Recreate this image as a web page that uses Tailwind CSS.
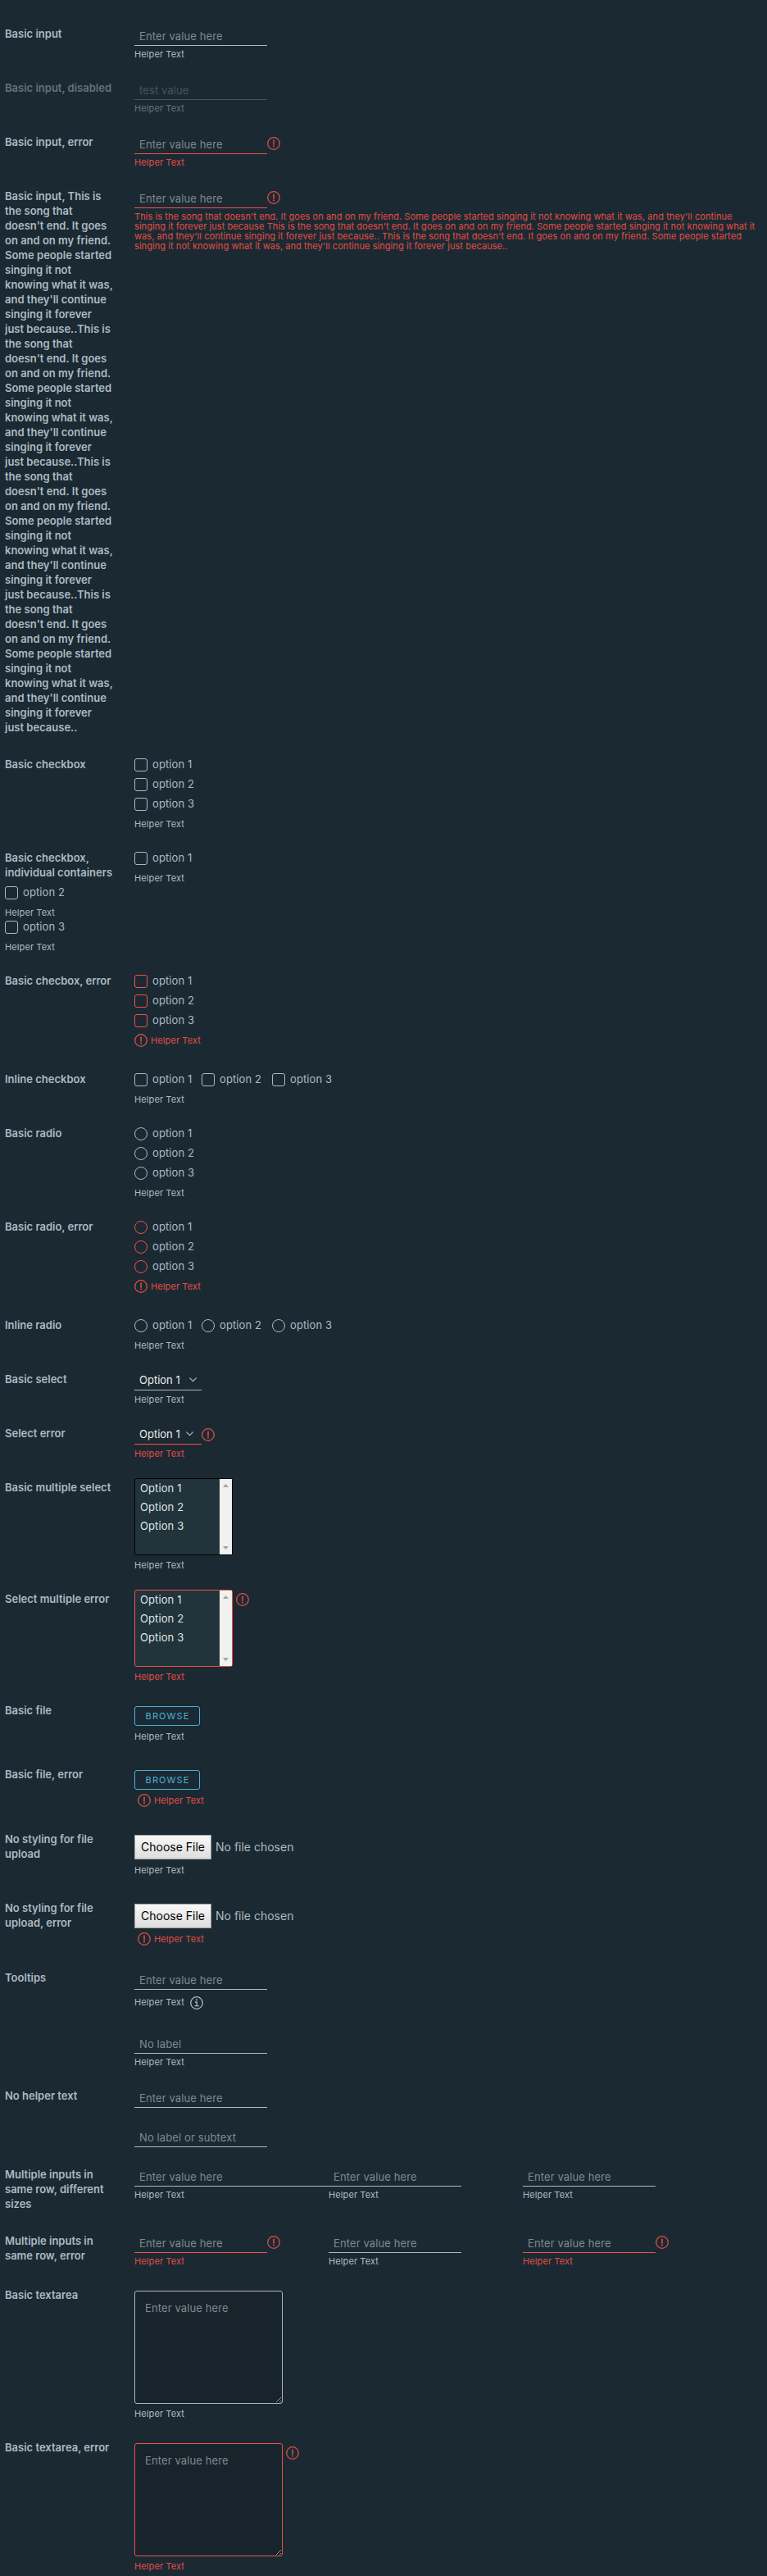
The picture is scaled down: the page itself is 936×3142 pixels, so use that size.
<!DOCTYPE html>
<html lang="en">
<head>
<meta charset="utf-8">
<title>Horizontal form</title>
<script src="https://cdn.jsdelivr.net/npm/@tailwindcss/browser@4"></script>
</head>
<body class="h-[3142px] overflow-hidden bg-[#1b2a32] pt-8 pl-1.5 font-[Inter,sans-serif] text-[13px] leading-[18px] text-[#acbac3]">
<svg class="hidden">
  <symbol id="alert" viewBox="0 0 16 16"><circle cx="8" cy="8" r="7.3" fill="none" stroke="currentColor" stroke-width="1.3"/><path d="M8 4.2v5" stroke="currentColor" stroke-width="1.5" stroke-linecap="round"/><circle cx="8" cy="11.5" r=".95" fill="currentColor"/></symbol>
  <symbol id="info" viewBox="0 0 16 16"><circle cx="8" cy="8" r="7.3" fill="none" stroke="currentColor" stroke-width="1.3"/><circle cx="7.9" cy="4.2" r="1.05" fill="currentColor"/><path d="M6.4 7h1.8v4.6M6 11.7h4.2" fill="none" stroke="currentColor" stroke-width="1.3" stroke-linecap="round"/></symbol>
  <symbol id="chevron" viewBox="0 0 9 6"><path d="M.7.8 4.5 4.6 8.3.8" fill="none" stroke="currentColor" stroke-width="1.2" stroke-linecap="round"/></symbol>
</svg>
<form class="flex flex-col">

<div class="flex h-[66px]">
  <label class="w-[158px] font-semibold">Basic input</label>
  <div><input class="block h-6 w-[162px] border-b border-[#acbac3] px-1.5 tracking-[0.11px] placeholder:text-[#7f898e]" placeholder="Enter value here"><p class="mt-1 text-[11px] leading-3 tracking-[0.1px]">Helper Text</p></div>
</div>

<div class="flex h-[66px]">
  <label class="w-[158px] font-semibold text-[#64727b]">Basic input, disabled</label>
  <div><input disabled class="block h-6 w-[162px] border-b border-[#495962] px-1.5 tracking-[0.11px] text-[#44535b]" value="test value"><p class="mt-1 text-[11px] leading-3 tracking-[0.1px] text-[#64727b]">Helper Text</p></div>
</div>

<div class="flex h-[66px]">
  <label class="w-[158px] font-semibold">Basic input, error</label>
  <div>
    <div class="flex"><input class="block h-6 w-[162px] border-b border-[#f54f47] px-1.5 tracking-[0.11px] placeholder:text-[#7f898e]" placeholder="Enter value here"><svg class="mt-[3px] size-4 text-[#e14c46]"><use href="#alert"/></svg></div>
    <p class="mt-1 text-[11px] leading-3 tracking-[0.1px] text-[#e14c46]">Helper Text</p>
  </div>
</div>

<div class="flex h-[693px]">
  <label class="w-[158px] font-semibold whitespace-nowrap">Basic input, This is<br>the song that<br>doesn't end. It goes<br>on and on my friend.<br>Some people started<br>singing it not<br>knowing what it was,<br>and they'll continue<br>singing it forever<br>just because..This is<br>the song that<br>doesn't end. It goes<br>on and on my friend.<br>Some people started<br>singing it not<br>knowing what it was,<br>and they'll continue<br>singing it forever<br>just because..This is<br>the song that<br>doesn't end. It goes<br>on and on my friend.<br>Some people started<br>singing it not<br>knowing what it was,<br>and they'll continue<br>singing it forever<br>just because..This is<br>the song that<br>doesn't end. It goes<br>on and on my friend.<br>Some people started<br>singing it not<br>knowing what it was,<br>and they'll continue<br>singing it forever<br>just because..</label>
  <div>
    <div class="flex"><input class="block h-6 w-[162px] border-b border-[#f54f47] px-1.5 tracking-[0.11px] placeholder:text-[#7f898e]" placeholder="Enter value here"><svg class="mt-[3px] size-4 text-[#e14c46]"><use href="#alert"/></svg></div>
    <p class="mt-1 text-[11px] leading-3 tracking-[0.07px] whitespace-nowrap text-[#e14c46]">This is the song that doesn't end. It goes on and on my friend. Some people started singing it not knowing what it was, and they'll continue<br>singing it forever just because This is the song that doesn't end. It goes on and on my friend. Some people started singing it not knowing what it<br>was, and they'll continue singing it forever just because.. This is the song that doesn't end. It goes on and on my friend. Some people started<br>singing it not knowing what it was, and they'll continue singing it forever just because..</p>
  </div>
</div>

<div class="flex h-[114px]">
  <label class="w-[158px] font-semibold">Basic checkbox</label>
  <div class="tracking-[0.1px]">
    <div class="flex h-6 gap-1.5"><i class="mt-0.5 size-4 rounded-[3px] border border-[#acbac3]"></i>option 1</div>
    <div class="flex h-6 gap-1.5"><i class="mt-0.5 size-4 rounded-[3px] border border-[#acbac3]"></i>option 2</div>
    <div class="flex h-6 gap-1.5"><i class="mt-0.5 size-4 rounded-[3px] border border-[#acbac3]"></i>option 3</div>
    <p class="mt-1 text-[11px] leading-3">Helper Text</p>
  </div>
</div>

<div class="h-[150px]">
  <div class="flex h-[42px]">
    <label class="w-[158px] font-semibold">Basic checkbox,<br>individual containers</label>
    <div class="tracking-[0.1px]"><div class="flex h-6 gap-1.5"><i class="mt-0.5 size-4 rounded-[3px] border border-[#acbac3]"></i>option 1</div><p class="mt-1 text-[11px] leading-3">Helper Text</p></div>
  </div>
  <div class="h-[42px] tracking-[0.1px]"><div class="flex h-6 gap-1.5"><i class="mt-0.5 size-4 rounded-[3px] border border-[#acbac3]"></i>option 2</div><p class="mt-1 text-[11px] leading-3">Helper Text</p></div>
  <div class="h-[42px] tracking-[0.1px]"><div class="flex h-6 gap-1.5"><i class="mt-0.5 size-4 rounded-[3px] border border-[#acbac3]"></i>option 3</div><p class="mt-1 text-[11px] leading-3">Helper Text</p></div>
</div>

<div class="flex h-[120px]">
  <label class="w-[158px] font-semibold">Basic checbox, error</label>
  <div class="tracking-[0.1px]">
    <div class="flex h-6 gap-1.5"><i class="mt-0.5 size-4 rounded-[3px] border border-[#f54f47]"></i>option 1</div>
    <div class="flex h-6 gap-1.5"><i class="mt-0.5 size-4 rounded-[3px] border border-[#f54f47]"></i>option 2</div>
    <div class="flex h-6 gap-1.5"><i class="mt-0.5 size-4 rounded-[3px] border border-[#f54f47]"></i>option 3</div>
    <p class="mt-0.5 flex items-center gap-1 text-[11px] leading-3 text-[#e14c46]"><svg class="size-4"><use href="#alert"/></svg>Helper Text</p>
  </div>
</div>

<div class="flex h-[66px]">
  <label class="w-[158px] font-semibold">Inline checkbox</label>
  <div class="tracking-[0.1px]">
    <div class="flex h-6">
      <div class="flex w-[82px] gap-1.5"><i class="mt-0.5 size-4 rounded-[3px] border border-[#acbac3]"></i>option 1</div>
      <div class="flex w-[86px] gap-1.5"><i class="mt-0.5 size-4 rounded-[3px] border border-[#acbac3]"></i>option 2</div>
      <div class="flex gap-1.5"><i class="mt-0.5 size-4 rounded-[3px] border border-[#acbac3]"></i>option 3</div>
    </div>
    <p class="mt-1 text-[11px] leading-3">Helper Text</p>
  </div>
</div>

<div class="flex h-[114px]">
  <label class="w-[158px] font-semibold">Basic radio</label>
  <div class="tracking-[0.1px]">
    <div class="flex h-6 gap-1.5"><i class="mt-0.5 size-4 rounded-full border border-[#acbac3]"></i>option 1</div>
    <div class="flex h-6 gap-1.5"><i class="mt-0.5 size-4 rounded-full border border-[#acbac3]"></i>option 2</div>
    <div class="flex h-6 gap-1.5"><i class="mt-0.5 size-4 rounded-full border border-[#acbac3]"></i>option 3</div>
    <p class="mt-1 text-[11px] leading-3">Helper Text</p>
  </div>
</div>

<div class="flex h-[120px]">
  <label class="w-[158px] font-semibold">Basic radio, error</label>
  <div class="tracking-[0.1px]">
    <div class="flex h-6 gap-1.5"><i class="mt-0.5 size-4 rounded-full border border-[#f54f47]"></i>option 1</div>
    <div class="flex h-6 gap-1.5"><i class="mt-0.5 size-4 rounded-full border border-[#f54f47]"></i>option 2</div>
    <div class="flex h-6 gap-1.5"><i class="mt-0.5 size-4 rounded-full border border-[#f54f47]"></i>option 3</div>
    <p class="mt-0.5 flex items-center gap-1 text-[11px] leading-3 text-[#e14c46]"><svg class="size-4"><use href="#alert"/></svg>Helper Text</p>
  </div>
</div>

<div class="flex h-[66px]">
  <label class="w-[158px] font-semibold">Inline radio</label>
  <div class="tracking-[0.1px]">
    <div class="flex h-6">
      <div class="flex w-[82px] gap-1.5"><i class="mt-0.5 size-4 rounded-full border border-[#acbac3]"></i>option 1</div>
      <div class="flex w-[86px] gap-1.5"><i class="mt-0.5 size-4 rounded-full border border-[#acbac3]"></i>option 2</div>
      <div class="flex gap-1.5"><i class="mt-0.5 size-4 rounded-full border border-[#acbac3]"></i>option 3</div>
    </div>
    <p class="mt-1 text-[11px] leading-3">Helper Text</p>
  </div>
</div>

<div class="flex h-[66px]">
  <label class="w-[158px] font-semibold">Basic select</label>
  <div>
    <div class="flex h-[23px] w-[82px] justify-between border-b border-[#acbac3] pt-px pr-[6px] pl-1.5 text-[#e9ecef]">Option 1<svg class="mt-[6px] h-1.5 w-[9px] text-[#acbac3]"><use href="#chevron"/></svg></div>
    <p class="mt-[5px] text-[11px] leading-3 tracking-[0.1px]">Helper Text</p>
  </div>
</div>

<div class="flex h-[66px]">
  <label class="w-[158px] font-semibold">Select error</label>
  <div>
    <div class="flex">
      <div class="flex h-[23px] w-[82px] justify-between border-b border-[#f54f47] pt-px pr-[10px] pl-1.5 text-[#e9ecef]">Option 1<svg class="mt-[6px] h-1.5 w-[9px] text-[#acbac3]"><use href="#chevron"/></svg></div>
      <svg class="mt-[3px] size-4 text-[#e14c46]"><use href="#alert"/></svg>
    </div>
    <p class="mt-[5px] text-[11px] leading-3 tracking-[0.1px] text-[#e14c46]">Helper Text</p>
  </div>
</div>

<div class="flex h-[136px]">
  <label class="w-[158px] font-semibold">Basic multiple select</label>
  <div class="-mt-0.5">
    <div class="flex h-[94px] w-[120px] justify-between rounded-[3px] border border-black bg-[#21333b] text-[#dfe4e8]">
      <div class="pl-1.5 leading-[23px] tracking-[0.1px]"><p>Option 1</p><p>Option 2</p><p>Option 3</p></div>
      <div class="flex w-[15px] flex-col items-center justify-between bg-[#f1f1f1] py-1.5 text-[#a3a3a3]"><svg class="h-1 w-[7px]" viewBox="0 0 7 4"><path d="M0 4 3.5 0 7 4Z" fill="currentColor"/></svg><svg class="h-1 w-[7px]" viewBox="0 0 7 4"><path d="M0 0 3.5 4 7 0Z" fill="currentColor"/></svg></div>
    </div>
    <p class="mt-1.5 text-[11px] leading-3 tracking-[0.1px]">Helper Text</p>
  </div>
</div>

<div class="flex h-[136px]">
  <label class="w-[158px] font-semibold">Select multiple error</label>
  <div class="-mt-0.5">
    <div class="flex gap-1">
      <div class="flex h-[94px] w-[120px] justify-between rounded-[3px] border border-[#f54f47] bg-[#21333b] text-[#dfe4e8]">
        <div class="pl-1.5 leading-[23px] tracking-[0.1px]"><p>Option 1</p><p>Option 2</p><p>Option 3</p></div>
        <div class="flex w-[15px] flex-col items-center justify-between bg-[#f1f1f1] py-1.5 text-[#a3a3a3]"><svg class="h-1 w-[7px]" viewBox="0 0 7 4"><path d="M0 4 3.5 0 7 4Z" fill="currentColor"/></svg><svg class="h-1 w-[7px]" viewBox="0 0 7 4"><path d="M0 0 3.5 4 7 0Z" fill="currentColor"/></svg></div>
      </div>
      <svg class="mt-1 size-4 text-[#e14c46]"><use href="#alert"/></svg>
    </div>
    <p class="mt-1.5 text-[11px] leading-3 tracking-[0.1px] text-[#e14c46]">Helper Text</p>
  </div>
</div>

<div class="flex h-[78px]">
  <label class="w-[158px] font-semibold">Basic file</label>
  <div class="pt-1">
    <button type="button" class="block h-6 w-20 rounded-[3px] border border-[#49afd9] pl-px text-center text-[11px] tracking-[1.1px] text-[#49afd9]">BROWSE</button>
    <p class="mt-[7px] text-[11px] leading-3 tracking-[0.1px]">Helper Text</p>
  </div>
</div>

<div class="flex h-[79px]">
  <label class="w-[158px] font-semibold">Basic file, error</label>
  <div class="pt-1">
    <button type="button" class="block h-6 w-20 rounded-[3px] border border-[#49afd9] pl-px text-center text-[11px] tracking-[1.1px] text-[#49afd9]">BROWSE</button>
    <p class="mt-[5px] ml-1 flex items-center gap-1 text-[11px] leading-3 tracking-[0.1px] text-[#e14c46]"><svg class="size-4"><use href="#alert"/></svg>Helper Text</p>
  </div>
</div>

<div class="flex h-[84px]">
  <label class="w-[158px] font-semibold">No styling for file<br>upload</label>
  <div class="pt-1">
    <div class="flex items-center gap-[5px] text-[14px]"><button type="button" class="h-[30px] w-[94px] border border-[#a0a0a0] bg-linear-to-b from-[#f8f8f8] to-[#dddddd] text-black">Choose File</button>No file chosen</div>
    <p class="mt-[7px] text-[11px] leading-3 tracking-[0.1px]">Helper Text</p>
  </div>
</div>

<div class="flex h-[85px]">
  <label class="w-[158px] font-semibold">No styling for file<br>upload, error</label>
  <div class="pt-1">
    <div class="flex items-center gap-[5px] text-[14px]"><button type="button" class="h-[30px] w-[94px] border border-[#a0a0a0] bg-linear-to-b from-[#f8f8f8] to-[#dddddd] text-black">Choose File</button>No file chosen</div>
    <p class="mt-[5px] ml-1 flex items-center gap-1 text-[11px] leading-3 tracking-[0.1px] text-[#e14c46]"><svg class="size-4"><use href="#alert"/></svg>Helper Text</p>
  </div>
</div>

<div class="flex h-[78px]">
  <label class="w-[158px] font-semibold">Tooltips</label>
  <div><input class="block h-6 w-[162px] border-b border-[#acbac3] px-1.5 tracking-[0.11px] placeholder:text-[#7f898e]" placeholder="Enter value here">
    <p class="mt-2 flex gap-[7px] text-[11px] leading-[14px] tracking-[0.1px]">Helper Text<svg class="size-4"><use href="#info"/></svg></p></div>
</div>

<div class="flex h-[66px] pl-[158px]">
  <div><input class="block h-6 w-[162px] border-b border-[#acbac3] px-1.5 tracking-[0.11px] placeholder:text-[#7f898e]" placeholder="No label"><p class="mt-1 text-[11px] leading-3 tracking-[0.1px]">Helper Text</p></div>
</div>

<div class="flex h-12">
  <label class="w-[158px] font-semibold">No helper text</label>
  <input class="block h-6 w-[162px] border-b border-[#acbac3] px-1.5 tracking-[0.11px] placeholder:text-[#7f898e]" placeholder="Enter value here">
</div>

<div class="flex h-12 pl-[158px]">
  <input class="block h-6 w-[162px] border-b border-[#acbac3] px-1.5 tracking-[0.11px] placeholder:text-[#7f898e]" placeholder="No label or subtext">
</div>

<div class="flex h-[81px]">
  <label class="w-[158px] font-semibold">Multiple inputs in<br>same row, different<br>sizes</label>
  <div class="w-[237px]"><input class="block h-6 w-full border-b border-[#acbac3] px-1.5 tracking-[0.11px] placeholder:text-[#7f898e]" placeholder="Enter value here"><p class="mt-1 text-[11px] leading-3 tracking-[0.1px]">Helper Text</p></div>
  <div class="w-[237px]"><input class="block h-6 w-[162px] border-b border-[#acbac3] px-1.5 tracking-[0.11px] placeholder:text-[#7f898e]" placeholder="Enter value here"><p class="mt-1 text-[11px] leading-3 tracking-[0.1px]">Helper Text</p></div>
  <div><input class="block h-6 w-[162px] border-b border-[#acbac3] px-1.5 tracking-[0.11px] placeholder:text-[#7f898e]" placeholder="Enter value here"><p class="mt-1 text-[11px] leading-3 tracking-[0.1px]">Helper Text</p></div>
</div>

<div class="flex h-[66px]">
  <label class="w-[158px] font-semibold">Multiple inputs in<br>same row, error</label>
  <div class="w-[237px]">
    <div class="flex"><input class="block h-6 w-[162px] border-b border-[#f54f47] px-1.5 tracking-[0.11px] placeholder:text-[#7f898e]" placeholder="Enter value here"><svg class="mt-[3px] size-4 text-[#e14c46]"><use href="#alert"/></svg></div>
    <p class="mt-1 text-[11px] leading-3 tracking-[0.1px] text-[#e14c46]">Helper Text</p>
  </div>
  <div class="w-[237px]"><input class="block h-6 w-[162px] border-b border-[#acbac3] px-1.5 tracking-[0.11px] placeholder:text-[#7f898e]" placeholder="Enter value here"><p class="mt-1 text-[11px] leading-3 tracking-[0.1px]">Helper Text</p></div>
  <div>
    <div class="flex"><input class="block h-6 w-[162px] border-b border-[#f54f47] px-1.5 tracking-[0.11px] placeholder:text-[#7f898e]" placeholder="Enter value here"><svg class="mt-[3px] size-4 text-[#e14c46]"><use href="#alert"/></svg></div>
    <p class="mt-1 text-[11px] leading-3 tracking-[0.1px] text-[#e14c46]">Helper Text</p>
  </div>
</div>

<div class="flex h-[186px]">
  <label class="w-[158px] font-semibold">Basic textarea</label>
  <div class="pt-1">
    <textarea class="block h-[138px] w-[181px] rounded-[3px] border border-[#acbac3] bg-[#17242b] px-3 py-[11px] leading-[18px] tracking-[0.11px] placeholder:text-[#7f898e]" placeholder="Enter value here"></textarea>
    <p class="mt-1.5 text-[11px] leading-3 tracking-[0.1px]">Helper Text</p>
  </div>
</div>

<div class="flex h-[166px]">
  <label class="w-[158px] font-semibold">Basic textarea, error</label>
  <div class="pt-1">
    <div class="flex gap-1"><textarea class="block h-[138px] w-[181px] rounded-[3px] border border-[#f54f47] bg-[#17242b] px-3 py-[11px] leading-[18px] tracking-[0.11px] placeholder:text-[#7f898e]" placeholder="Enter value here"></textarea><svg class="mt-1 size-4 text-[#e14c46]"><use href="#alert"/></svg></div>
    <p class="mt-1.5 text-[11px] leading-3 tracking-[0.1px] text-[#e14c46]">Helper Text</p>
  </div>
</div>

</form>
</body>
</html>
